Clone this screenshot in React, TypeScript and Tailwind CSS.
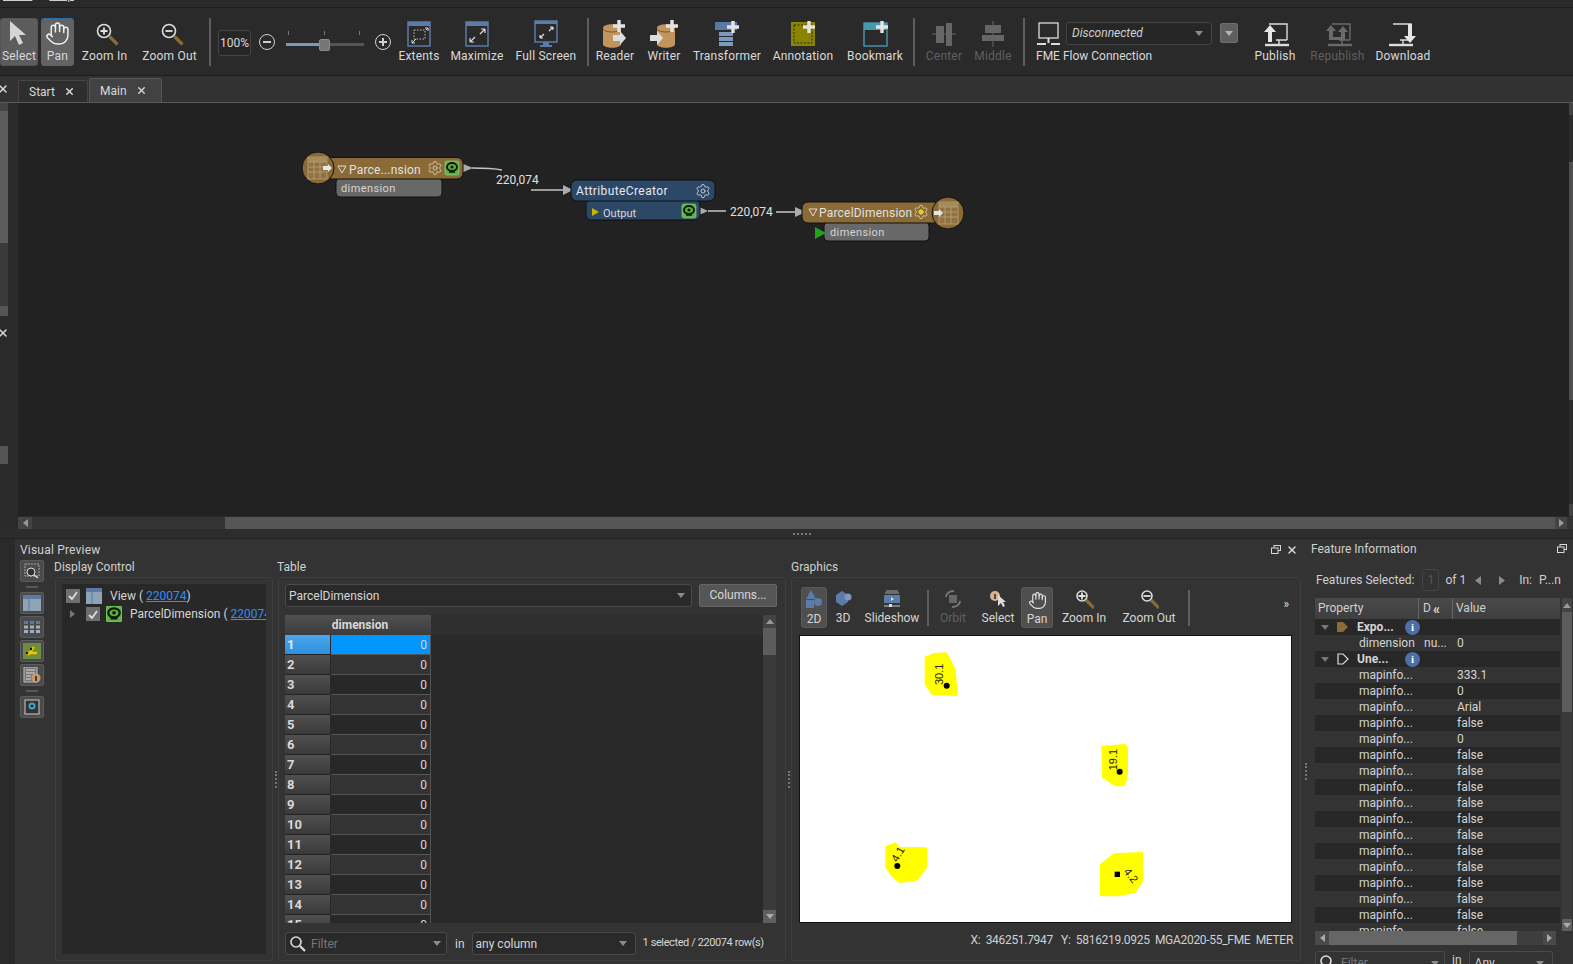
import React from 'react';
import { Hand, X, Settings } from 'lucide-react';

const font = { fontFamily: 'Roboto,"Noto Sans",sans-serif' };

// small drawn icons, all on a 32x30 box unless said otherwise
const Svg = ({ children, w = 32, h = 30 }: { children: React.ReactNode; w?: number; h?: number }) => (
  <svg width={w} height={h} viewBox={`0 0 ${w} ${h}`} className="block shrink-0">{children}</svg>
);
const Plus = ({ x, y, s = 12 }: { x: number; y: number; s?: number }) => (
  <path d={`M${x - s / 2} ${y}h${s}M${x} ${y - s / 2}v${s}`} stroke="#e4e4e4" strokeWidth="3.4" />
);
const Lens = ({ sign, cx = 13, cy = 11, r = 6.5 }: { sign: '+' | '-'; cx?: number; cy?: number; r?: number }) => (
  <g>
    <path d={`M${cx + r - 1} ${cy + r - 1}l8 8`} stroke="#8a6a34" strokeWidth="3.2" />
    <circle cx={cx} cy={cy} r={r} fill="#2a2a2a" stroke="#dcdcdc" strokeWidth="1.6" />
    <path d={sign === '+' ? `M${cx - 3.5} ${cy}h7M${cx} ${cy - 3.5}v7` : `M${cx - 3.5} ${cy}h7`} stroke="#e4e4e4" strokeWidth="1.8" />
  </g>
);
const Can = () => (
  <g>
    <path d="M4 9c0-5 18-5 18 0v16c0 5-18 5-18 0z" fill="#c2955c" />
    <path d="M4 10c2 4 16 4 18 0" stroke="#7c5a2c" strokeWidth="1" fill="none" />
  </g>
);
const Arrow = ({ x, y, fill = '#dcdcdc' }: { x: number; y: number; fill?: string }) => (
  <path d={`M${x} ${y - 3}h7v-4l6 7-6 7v-4h-7z`} fill={fill} />
);
const Net = ({ c = '#dcdcdc' }: { c?: string }) => (
  <g fill="none" stroke={c} strokeWidth="1.4">
    <path d="M10 4h18v16" />
    <path d="M17 20h11M20 20v5" />
    <path d="M6 25h24" strokeWidth="2.4" />
  </g>
);

const Tool = ({ w, label, active, selected, disabled, children }: { w: string; label: string; active?: boolean; selected?: boolean; disabled?: boolean; children: React.ReactNode }) => (
  <div className={`${w} h-[48px] shrink-0 flex flex-col items-center rounded-[3px] border ${selected ? 'border-[#2f6fa8] bg-[#636363]' : active ? 'border-[#555] bg-[#5c5c5c]' : 'border-transparent'}`}>
    <div className="h-[29px] flex items-center justify-center">{children}</div>
    <span className={`text-[12px] leading-[16px] tracking-[.2px] whitespace-nowrap ${disabled ? 'text-[#5f5f5f]' : 'text-[#d9d9d9]'}`}>{label}</span>
  </div>
);
const Sep = ({ m }: { m: string }) => <div className={`w-[2px] h-[48px] bg-[#5e5e5e] shrink-0 ${m}`} />;

function Toolbar() {
  return (
    <div className="h-[68px] bg-[#2a2a2a] border-b border-[#1e1e1e] flex items-start pt-[10px] shrink-0">
      <Tool w="w-[38px]" label="Select" active>
        <Svg w={26} h={28}><path d="M4 1v20l5-5 4 9 4-2-4-8h7z" fill="#d6d6d6" /></Svg>
      </Tool>
      <div className="w-[3px] shrink-0" />
      <Tool w="w-[33px]" label="Pan" selected><Hand size={25} strokeWidth={1.4} color="#f0f0f0" /></Tool>
      <Tool w="w-[61px]" label="Zoom In"><Svg w={28} h={28}><Lens sign="+" /></Svg></Tool>
      <Tool w="w-[69px]" label="Zoom Out"><Svg w={28} h={28}><Lens sign="-" /></Svg></Tool>
      <Sep m="ml-[5px]" />
      <div className="ml-[7px] w-[33px] h-[26px] mt-[12px] border border-[#444] rounded-[3px] bg-[#262626] text-[12px] leading-[24px] text-center text-[#d9d9d9] shrink-0">100%</div>
      <div className="ml-[8px] mt-[16px] w-[16px] h-[16px] rounded-full border-[1.5px] border-[#d0d0d0] flex items-center justify-center shrink-0"><div className="w-[8px] h-[2px] bg-[#d0d0d0]" /></div>
      <div className="ml-[11px] mt-[13px] w-[78px] shrink-0">
        <div className="flex justify-between px-[4px] pl-[2px] h-[4px]">
          <div className="w-px h-[4px] bg-[#777]" /><div className="w-px h-[4px] bg-[#777]" /><div className="w-px h-[4px] bg-[#777]" />
        </div>
        <div className="flex h-[15px] items-center mt-[2px]">
          <div className="w-[33px] h-[3px] bg-[#7b98c0]" />
          <div className="w-[11px] h-[12px] rounded-[2px] bg-[#767676] border border-[#8a8a8a]" />
          <div className="flex-1 h-[3px] bg-[#555]" />
        </div>
      </div>
      <div className="ml-[11px] mt-[16px] w-[16px] h-[16px] rounded-full border-[1.5px] border-[#d0d0d0] flex items-center justify-center relative shrink-0">
        <div className="w-[8px] h-[2px] bg-[#d0d0d0]" /><div className="absolute w-[2px] h-[8px] bg-[#d0d0d0]" />
      </div>
      <div className="w-[7px] shrink-0" />
      <Tool w="w-[42px]" label="Extents">
        <Svg w={24} h={26}><rect x="1" y="1" width="22" height="24" fill="none" stroke="#5b7ba8" strokeWidth="1.5" /><rect x="1" y="1" width="22" height="4" fill="#5b7ba8" /><rect x="7" y="9" width="11" height="9" fill="none" stroke="#bbb" strokeDasharray="1.5 1.5" /><path d="M5 22l4-4M5 22h3M5 22v-3M19 9l2-2M21 7h-3M21 7v3" stroke="#ddd" /></Svg>
      </Tool>
      <Tool w="w-[74px]" label="Maximize">
        <Svg w={24} h={26}><rect x="1" y="1" width="22" height="24" fill="none" stroke="#5b7ba8" strokeWidth="1.5" /><rect x="1" y="1" width="22" height="4" fill="#5b7ba8" /><path d="M5 21l5-5M5 21h4M5 21v-4M20 8l-5 5M20 8h-4M20 8v4" stroke="#ddd" strokeWidth="1.2" fill="none" /></Svg>
      </Tool>
      <Tool w="w-[64px]" label="Full Screen">
        <Svg w={24} h={28}><rect x="1" y="1" width="22" height="21" fill="none" stroke="#5b7ba8" strokeWidth="1.5" /><rect x="1" y="1" width="22" height="3" fill="#5b7ba8" /><path d="M6 18l4-4M6 18h3M6 18v-3M19 7l-4 4M19 7h-3M19 7v3" stroke="#ddd" strokeWidth="1.2" fill="none" /><path d="M9 22h6v3h3v2H6v-2h3z" fill="#5b7ba8" /></Svg>
      </Tool>
      <Sep m="ml-[9px]" />
      <div className="w-[3px] shrink-0" />
      <Tool w="w-[46px]" label="Reader"><Svg w={32} h={30}><Can /><Arrow x={14} y={19} /><Plus x={20} y={7} /></Svg></Tool>
      <Tool w="w-[52px]" label="Writer"><Svg w={32} h={30}><g transform="translate(5 0)"><Can /></g><Arrow x={2} y={19} /><Plus x={24} y={7} /></Svg></Tool>
      <Tool w="w-[74px]" label="Transformer">
        <Svg w={28} h={28}><rect x="2" y="2" width="22" height="8" fill="#5878a6" /><rect x="6" y="12" width="14" height="4" fill="#7d99bf" /><rect x="6" y="17" width="14" height="4" fill="#7d99bf" /><rect x="6" y="22" width="14" height="4" fill="#7d99bf" /><Plus x={20} y={7} /></Svg>
      </Tool>
      <Tool w="w-[78px]" label="Annotation">
        <Svg w={28} h={28}><rect x="2" y="2" width="24" height="24" fill="#8b8400" /><rect x="5" y="5" width="18" height="18" fill="none" stroke="#2b2b10" strokeDasharray="2 1.5" /><Plus x={20} y={7} /></Svg>
      </Tool>
      <Tool w="w-[66px]" label="Bookmark">
        <Svg w={28} h={28}><rect x="3" y="3" width="23" height="23" fill="none" stroke="#459aaf" strokeWidth="1.4" /><rect x="3" y="3" width="23" height="7" fill="#459aaf" /><Plus x={21} y={7} /></Svg>
      </Tool>
      <Sep m="ml-[5px]" />
      <div className="w-[5px] shrink-0" />
      <Tool w="w-[48px]" label="Center" disabled>
        <Svg w={28} h={28}><path d="M2 14h24" stroke="#666" /><rect x="6" y="6" width="8" height="17" fill="#666" /><rect x="16" y="3" width="6" height="23" fill="#666" /></Svg>
      </Tool>
      <Tool w="w-[50px]" label="Middle" disabled>
        <Svg w={28} h={28}><path d="M14 1v26" stroke="#666" /><rect x="6" y="5" width="16" height="8" fill="#666" /><rect x="3" y="15" width="22" height="6" fill="#666" /></Svg>
      </Tool>
      <Sep m="ml-[5px]" />
      <div className="ml-[11px] w-[204px] shrink-0 h-[48px] flex flex-col">
        <div className="h-[30px] flex items-center">
          <Svg w={26} h={26}><rect x="3" y="3" width="19" height="15" fill="none" stroke="#dcdcdc" strokeWidth="1.3" /><path d="M12.5 18v5M1 24h9M15 24h9" stroke="#dcdcdc" strokeWidth="2" /></Svg>
          <div className="ml-[4px] w-[146px] h-[23px] border border-[#444] rounded-[3px] bg-[#262626] flex items-center justify-between pl-[5px] pr-[8px] shrink-0">
            <span className="text-[12px] italic text-[#d0d0d0]">Disconnected</span>
            <svg width="8" height="5"><path d="M0 0h8l-4 5z" fill="#8b8b8b" /></svg>
          </div>
          <div className="ml-[8px] w-[18px] h-[20px] bg-[#5f5f5f] border border-[#6e6e6e] rounded-[2px] flex items-center justify-center shrink-0">
            <svg width="8" height="5"><path d="M0 0h8l-4 5z" fill="#b4b4b4" /></svg>
          </div>
        </div>
        <span className="text-[12px] leading-[16px] whitespace-nowrap text-[#d9d9d9]">FME Flow Connection</span>
      </div>
      <Tool w="w-[70px]" label="Publish"><Svg w={32} h={28}><Net /><path d="M9 22v-10H5l6-7 6 7h-4v10z" fill="#e6e6e6" /></Svg></Tool>
      <Tool w="w-[55px]" label="Republish" disabled><Svg w={32} h={28}><Net c="#6a6a6a" /><path d="M7 20V11H4l5-6 5 6h-3v6h8v-5h-3l5-6 5 6h-3v8z" fill="#6a6a6a" /></Svg></Tool>
      <Tool w="w-[76px]" label="Download"><Svg w={32} h={28}><g transform="translate(-4 0)"><Net /></g><path d="M21 4h4v12h4l-6 7-6-7h4z" fill="#e6e6e6" /></Svg></Tool>
    </div>
  );
}

function Tabs() {
  return (
    <div className="h-[27px] bg-[#323232] border-b border-[#5a5a5a] flex items-end shrink-0 relative">
      <div className="w-[18px] h-full flex items-center justify-center -ml-[6px]"><X size={12} strokeWidth={3} color="#d8d8d8" /></div>
      <div className="ml-[6px] w-[70px] h-[22px] bg-[#2e2e2e] border border-b-0 border-[#444] rounded-t-[2px] flex items-center pl-[10px] gap-[9px] text-[12px] text-[#d9d9d9]">
        Start <X size={11} strokeWidth={3} color="#d8d8d8" />
      </div>
      <div className="ml-[1px] w-[73px] h-[24px] bg-[#424242] border border-b-0 border-[#555] rounded-t-[2px] flex items-center pl-[10px] gap-[9px] text-[12px] text-[#d9d9d9]">
        Main <X size={11} strokeWidth={3} color="#d8d8d8" />
      </div>
    </div>
  );
}

const Gear = ({ x, y, dot, c = '#d6c9a8' }: { x: number; y: number; dot?: boolean; c?: string }) => (
  <g>
    <Settings x={x - 8} y={y - 8} width={16} height={16} color={c} strokeWidth={1.4} />
    {dot && <circle cx={x} cy={y} r="2.4" fill="#e3d21c" />}
  </g>
);
const GreenLens = ({ x, y, s = 14 }: { x: number; y: number; s?: number }) => (
  <g transform={`translate(${x} ${y})`}>
    <rect width={s} height={s} rx="2" fill="#5cb53f" stroke="#9ad58a" strokeWidth=".6" />
    <ellipse cx={s / 2} cy={s / 2 - 1} rx={s / 2 - 2} ry={s / 2 - 3} fill="none" stroke="#0c1a08" strokeWidth="2" />
    <circle cx={s / 2} cy={s / 2 - 1} r="1.6" fill="#0c1a08" />
    <path d={`M${s / 2 - 3} ${s - 3}h6`} stroke="#0c1a08" strokeWidth="1.6" />
  </g>
);
const TableGlyph = ({ x, y }: { x: number; y: number }) => (
  <g transform={`translate(${x} ${y})`}>
    <rect width="19" height="22" fill="#8f7344" stroke="#b9a278" strokeWidth=".8" />
    <rect width="19" height="5" fill="#a58b5e" />
    <path d="M0 5h19M0 10h19M0 15h19M6 5v17M12 5v17" stroke="#b9a278" strokeWidth=".8" />
  </g>
);

// the workspace: nodes sit on a free canvas, so these are placed by coordinates
function Canvas() {
  return (
    <div className="relative flex-1 bg-[#222222] overflow-hidden">
      {/* origin of this box is 18,103 on the page */}
      <svg width="1551" height="413" className="absolute left-0 top-0">
        <g transform="translate(-18 -103)">
          <path d="M472 168c12 0 20 0 30 2M531 190h34M708 211h18M776 212h22" stroke="#c4c4c4" strokeWidth="1.4" fill="none" />
          <path d="M461 163l12 5-12 5zM563 185l10 5-10 5zM697 206l11 5-11 5zM795 207l11 5-11 5z" fill="#a9adb3" />

          <rect x="336" y="178" width="106" height="19" rx="4" fill="#686868" stroke="#111" />
          <rect x="326" y="157.5" width="137" height="21.5" rx="6" fill="#8a6a37" stroke="#111" />
          <circle cx="318" cy="168" r="16" fill="#8a6a37" stroke="#111" />
          <TableGlyph x={308} y={157} />
          <path d="M323 166h5v-2l4 4-4 4v-2h-5z" fill="#e6e6e6" />
          <path d="M338 166h8l-4 7z" fill="none" stroke="#e4dcc6" />
          <Gear x={435} y={168} />
          <GreenLens x={445} y={161} />

          <rect x="586" y="200" width="114" height="20" rx="5" fill="#2d4766" stroke="#111" />
          <rect x="571" y="180" width="144" height="21" rx="6" fill="#2d4766" stroke="#111" />
          <Gear x={703} y={191} c="#c4d0e0" />
          <path d="M592 208l7 4-7 4z" fill="#c9b400" />
          <GreenLens x={682} y={204} />

          <rect x="824" y="222" width="105" height="19" rx="4" fill="#686868" stroke="#111" />
          <rect x="802" y="202" width="138" height="21" rx="6" fill="#8a6a37" stroke="#111" />
          <path d="M809 209h8l-4 7z" fill="none" stroke="#e4dcc6" />
          <Gear x={921} y={212} dot />
          <circle cx="948" cy="213" r="16" fill="#8a6a37" stroke="#111" />
          <TableGlyph x={939} y={202} />
          <path d="M934 211h5v-2l4 4-4 4v-2h-5z" fill="#e6e6e6" />
          <path d="M815 227l11 6-11 6z" fill="#1fa31f" />
        </g>
      </svg>
      <span className="absolute left-[331px] top-[59px] text-[12px] leading-[16px] tracking-[.2px] text-[#e0e0e0]">Parce...nsion</span>
      <span className="absolute left-[323px] top-[78px] text-[11px] leading-[16px] tracking-[.4px] text-[#d5d5d5]">dimension</span>
      <span className="absolute left-[478px] top-[69px] text-[12px] leading-[16px] text-[#e0e0e0]">220,074</span>
      <span className="absolute left-[558px] top-[80px] text-[12px] leading-[16px] tracking-[.4px] text-[#e8e8e8]">AttributeCreator</span>
      <span className="absolute left-[585px] top-[103px] text-[11px] leading-[16px] text-[#d8d8d8]">Output</span>
      <span className="absolute left-[712px] top-[101px] text-[12px] leading-[16px] text-[#e0e0e0]">220,074</span>
      <span className="absolute left-[801px] top-[102px] text-[12px] leading-[16px] tracking-[.2px] text-[#e0e0e0]">ParcelDimension</span>
      <span className="absolute left-[812px] top-[122px] text-[11px] leading-[16px] tracking-[.4px] text-[#d5d5d5]">dimension</span>
    </div>
  );
}

const BtnIcon = ({ children }: { children: React.ReactNode }) => (
  <div className="w-[24px] h-[22px] bg-[#4b4b4b] border border-[#5c5c5c] rounded-[2px] flex items-center justify-center">{children}</div>
);
const MiniSep = () => <div className="w-[12px] h-[2px] bg-[#5a5a5a] mx-auto my-[2px]" />;

function PreviewStrip() {
  return (
    <div className="w-[24px] ml-[6px] mr-[11px] flex flex-col gap-[2px] shrink-0 pt-[3px]">
      <BtnIcon><svg width="16" height="16"><rect x="1" y="1" width="14" height="12" fill="none" stroke="#aaa" strokeDasharray="2 1" /><circle cx="7" cy="9" r="4" fill="#333" stroke="#ddd" /><path d="M10 12l4 3" stroke="#ddd" strokeWidth="1.5" /></svg></BtnIcon>
      <MiniSep />
      <BtnIcon><svg width="18" height="16"><rect width="18" height="16" fill="#8ea4b4" /><rect width="18" height="4" fill="#5b7ba0" /><path d="M6 4v12" stroke="#5b7ba0" /></svg></BtnIcon>
      <BtnIcon><svg width="16" height="14"><path d="M0 1h4v3H0zM6 1h4v3H6zM12 1h4v3h-4z" fill="#5b7ba0" /><path d="M0 5.500h4v3H0zM6 5.500h4v3H6zM12 5.500h4v3h-4zM0 10h4v3H0zM6 10h4v3H6zM12 10h4v3h-4z" fill="#9fb0c0" /></svg></BtnIcon>
      <BtnIcon><svg width="18" height="16"><rect width="18" height="16" fill="#6f8b3c" /><path d="M5 12l6-8M3 10h11" stroke="#e8c700" strokeWidth="2.4" /><circle cx="8" cy="6" r="1.200" fill="#111" /><circle cx="4" cy="10" r="1.200" fill="#111" /></svg></BtnIcon>
      <BtnIcon><svg width="18" height="16"><rect x="1" width="13" height="15" fill="#777" stroke="#bbb" /><path d="M3 3h9M3 6h9M3 9h5M3 12h5" stroke="#ddd" /><circle cx="13" cy="11" r="4.500" fill="#c99a6c" /><path d="M13 9v5" stroke="#222" strokeWidth="1.500" /></svg></BtnIcon>
      <MiniSep />
      <BtnIcon><svg width="16" height="16"><rect x="1" y="1" width="14" height="14" fill="#333" stroke="#ccc" /><circle cx="8" cy="7" r="3.500" fill="#3aa3c2" /><circle cx="8" cy="7" r="1.300" fill="#111" /></svg></BtnIcon>
    </div>
  );
}

const Check = () => (
  <div className="w-[14px] h-[14px] bg-[#6e6e6e] flex items-center justify-center shrink-0">
    <svg width="10" height="9"><path d="M1 5l3 3 5-7" fill="none" stroke="#ddd" strokeWidth="1.800" /></svg>
  </div>
);
const Lnk = ({ children }: { children: string }) => <span className="text-[#2e8dff] underline">{children}</span>;

function DisplayControl() {
  return (
    <div className="w-[218px] shrink-0 flex flex-col">
      <div className="h-[19px] text-[12px] leading-[19px] text-[#d0d0d0] -ml-px">Display Control</div>
      <div className="flex-1 border border-[#3e3e3e] rounded-[3px] p-[6px] min-h-0">
        <div className="h-full bg-[#282828] pt-[2px] overflow-hidden">
          <div className="h-[19px] flex items-center pl-[4px] text-[12px] text-[#d6d6d6] whitespace-nowrap">
            <Check />
            <svg width="16" height="16" className="ml-[6px] shrink-0"><rect width="16" height="16" fill="#8ea4b4" /><rect width="16" height="4" fill="#5b7ba0" /><path d="M6 4v12" stroke="#5b7ba0" /></svg>
            <span className="ml-[8px]">View ( <Lnk>220074</Lnk>)</span>
          </div>
          <div className="h-[18px] flex items-center pl-[8px] text-[12px] text-[#d6d6d6] whitespace-nowrap">
            <svg width="6" height="8" className="shrink-0"><path d="M0 0l5 4-5 4z" fill="#777" /></svg>
            <div className="ml-[10px] flex items-center"><Check /></div>
            <svg width="16" height="16" viewBox="0 0 14 14" className="ml-[6px] shrink-0"><GreenLens x={0} y={0} /></svg>
            <span className="ml-[8px]">ParcelDimension ( <Lnk>220074</Lnk></span>
          </div>
        </div>
      </div>
    </div>
  );
}

const rows = [1, 2, 3, 4, 5, 6, 7, 8, 9, 10, 11, 12, 13, 14, 15];

function TablePanel() {
  return (
    <div className="w-[508px] shrink-0 flex flex-col">
      <div className="h-[19px] text-[12px] leading-[19px] text-[#d0d0d0] -ml-px">Table</div>
      <div className="flex-1 border border-[#3e3e3e] rounded-[3px] px-[6px] pt-[6px] min-h-0 flex flex-col">
        <div className="flex h-[23px] shrink-0">
          <div className="w-[407px] bg-[#2a2a2a] border border-[#4a4a4a] rounded-[3px] flex items-center justify-between pl-[3px] pr-[6px] text-[12px] text-[#d6d6d6]">
            ParcelDimension
            <svg width="8" height="5"><path d="M0 0h8l-4 5z" fill="#8b8b8b" /></svg>
          </div>
          <div className="ml-[7px] w-[78px] bg-[#565656] border border-[#666] rounded-[2px] text-center text-[12px] leading-[20px] text-[#d6d6d6]">Columns...</div>
        </div>
        <div className="mt-[8px] flex h-[308px] shrink-0">
          <div className="w-[478px] bg-[#292929] overflow-hidden">
            <div className="flex h-[20px] bg-[#2f2f2f]">
              <div className="w-[146px] bg-gradient-to-b from-[#505050] to-[#3c3c3c] text-center text-[12px] font-bold leading-[20px] text-[#d8d8d8] pl-[4px]">dimension</div>
            </div>
            {rows.map((n) => (
              <div key={n} className="flex h-[20px]">
                <div className={`w-[45px] pl-[2px] text-[13px] font-bold leading-[20px] border-b border-[#222] ${n === 1 ? 'bg-gradient-to-b from-[#4aa8ee] to-[#2f8fdb] text-[#e8e8e8]' : 'bg-gradient-to-b from-[#505050] to-[#3a3a3a] text-[#d8d8d8]'}`}>{n}</div>
                <div className={`ml-px w-[100px] text-right pr-[3px] text-[12px] leading-[20px] text-[#d8d8d8] border-b border-r border-[#555] ${n === 1 ? 'bg-[#0095ff]' : n % 2 ? 'bg-[#282828]' : 'bg-[#333333]'}`}>0</div>
              </div>
            ))}
          </div>
          <div className="w-[13px] flex flex-col bg-[#3a3a3a]">
            <div className="h-[13px] bg-[#444] flex items-center justify-center"><svg width="8" height="5"><path d="M4 0l4 5H0z" fill="#999" /></svg></div>
            <div className="h-[27px] bg-[#5c5c5c]" />
            <div className="flex-1" />
            <div className="h-[13px] bg-[#5f5f5f] flex items-center justify-center"><svg width="8" height="5"><path d="M0 0h8l-4 5z" fill="#aaa" /></svg></div>
          </div>
        </div>
        <div className="mt-[9px] flex items-center text-[12px] text-[#d6d6d6] h-[23px] shrink-0">
          <div className="w-[162px] h-full border border-[#4a4a4a] rounded-[3px] bg-[#2a2a2a] flex items-center pl-[3px] pr-[5px]">
            <svg width="18" height="18" className="shrink-0"><circle cx="7" cy="7" r="5" fill="none" stroke="#dcdcdc" strokeWidth="1.600" /><path d="M11 11l5 5" stroke="#dcdcdc" strokeWidth="2.200" /></svg>
            <span className="ml-[4px] text-[#777] flex-1">Filter</span>
            <svg width="8" height="5"><path d="M0 0h8l-4 5z" fill="#8b8b8b" /></svg>
          </div>
          <span className="ml-[8px]">in</span>
          <div className="ml-[7px] w-[164px] h-full border border-[#4a4a4a] rounded-[3px] bg-[#2a2a2a] flex items-center justify-between pl-[3px] pr-[8px] shrink-0">
            any column
            <svg width="8" height="5"><path d="M0 0h8l-4 5z" fill="#8b8b8b" /></svg>
          </div>
          <span className="ml-[7px] whitespace-nowrap text-[11px] tracking-[-.4px]">1 selected / 220074 row(s)</span>
        </div>
      </div>
    </div>
  );
}

const GTool = ({ w, label, on, disabled, children }: { w: string; label: string; on?: boolean; disabled?: boolean; children: React.ReactNode }) => (
  <div className={`${w} h-[41px] shrink-0 flex flex-col items-center rounded-[3px] ${on ? 'bg-[#4f4f4f] border border-[#5a5a5a]' : ''}`}>
    <div className="h-[24px] flex items-center justify-center">{children}</div>
    <span className={`text-[12px] leading-[15px] whitespace-nowrap ${disabled ? 'text-[#606060]' : 'text-[#d6d6d6]'}`}>{label}</span>
  </div>
);

function GraphicsPanel() {
  return (
    <div className="w-[510px] shrink-0 flex flex-col">
      <div className="h-[19px] text-[12px] leading-[19px] text-[#d0d0d0]">Graphics</div>
      <div className="flex-1 border border-[#3e3e3e] rounded-[3px] min-h-0 flex flex-col pl-[7px] pr-[8px]">
        <div className="h-[57px] pt-[9px] flex shrink-0 relative pl-[2px]">
          <GTool w="w-[26px]" label="2D" on><svg width="18" height="20"><path d="M6 0l5 9H1z" fill="#5b7ba8" /><rect x="1" y="10" width="8" height="8" fill="#5b7ba8" /><circle cx="13" cy="12" r="4" fill="#5b7ba8" /></svg></GTool>
          <GTool w="w-[32px]" label="3D"><svg width="18" height="20"><path d="M8 2l6 4v7l-6 4-6-4V6z" fill="#5b7ba8" /><circle cx="14" cy="8" r="3.500" fill="#7d99bf" /></svg></GTool>
          <GTool w="w-[66px]" label="Slideshow"><svg width="18" height="18"><path d="M3 1h12M2 3h14" stroke="#9ba8b8" /><rect x="1" y="5" width="16" height="8" fill="#5b7ba8" /><path d="M8 7l3 2-3 2z" fill="#ddd" /><path d="M1 16h16" stroke="#ccc" /><rect x="6" y="14" width="3" height="3" fill="#ddd" /></svg></GTool>
          <div className="w-[2px] h-[36px] mt-[3px] bg-[#5e5e5e] mx-[2px] shrink-0" />
          <GTool w="w-[44px]" label="Orbit" disabled><svg width="18" height="20"><rect x="5" y="6" width="8" height="8" fill="#666" /><path d="M2 8c0-4 4-6 8-6M16 12c0 4-4 6-8 6" stroke="#777" strokeWidth="2" fill="none" /></svg></GTool>
          <GTool w="w-[46px]" label="Select"><svg width="20" height="20"><circle cx="7" cy="7" r="5" fill="#d8b48c" /><path d="M7 5v5" stroke="#222" strokeWidth="1.500" /><path d="M10 6v11l3-3 2 4 2-1-2-4h3z" fill="#ddd" /></svg></GTool>
          <GTool w="w-[32px]" label="Pan" on><Hand size={19} strokeWidth={1.400} color="#e8e8e8" /></GTool>
          <GTool w="w-[62px]" label="Zoom In"><svg width="20" height="20"><Lens sign="+" cx={8} cy={7} r={5} /></svg></GTool>
          <GTool w="w-[68px]" label="Zoom Out"><svg width="20" height="20"><Lens sign="-" cx={8} cy={7} r={5} /></svg></GTool>
          <div className="w-[2px] h-[36px] mt-[3px] bg-[#5e5e5e] ml-[5px] shrink-0" />
          <span className="absolute right-[4px] top-[17px] text-[12px] text-[#dcdcdc] tracking-[-1px]">»</span>
        </div>
        <div className="h-[288px] border border-[#111] bg-white shrink-0 overflow-hidden">
          <svg width="490" height="286" viewBox="-180 -15 1470 858" className="block">
            <g fill="#ffff00" stroke="#ffff00" strokeWidth="8" strokeLinejoin="round">
              <path d="M198 50l25-10 35-2 25 47 6 76-72-4-19-28z" />
              <path d="M728 318l66-5 6 9v78l-8 32h-26l-36-25z" />
              <path d="M80 618l25-10 10 13 82 2v56l-28 36-50 7-22-19-17-25z" />
              <path d="M724 672l38-31 83-4v83l-22 33-53 9-46 0z" />
            </g>
            <g fill="#000">
              <circle cx="260" cy="134" r="9" />
              <circle cx="779" cy="392" r="9" />
              <circle cx="112" cy="675" r="9" />
              <rect x="764" y="692" width="16" height="16" />
            </g>
            <g fontSize="33" fill="#222" style={{ fontFamily: '"Liberation Sans",sans-serif' }}>
              <text transform="translate(249 132) rotate(-90)">30.1</text>
              <text transform="translate(770 388) rotate(-90)">19.1</text>
              <text transform="translate(112 665) rotate(-60)">4.1</text>
              <text transform="translate(790 692) rotate(52)">4.2</text>
            </g>
          </svg>
        </div>
        <div className="flex-1 flex items-center justify-end text-[12px] tracking-[-.3px] text-[#d0d0d0] whitespace-pre pr-0 -mr-[1px] pb-[3px]">X:  346251.7947   Y:  5816219.0925  MGA2020-55_FME  METER</div>
      </div>
    </div>
  );
}

const infoRows: { k?: string; v?: string; d?: string; head?: 'exp' | 'une' }[] = [
  { head: 'exp', k: 'Expo...' },
  { k: 'dimension', d: 'nu...', v: '0' },
  { head: 'une', k: 'Une...' },
  { k: 'mapinfo...', v: '333.1' },
  { k: 'mapinfo...', v: '0' },
  { k: 'mapinfo...', v: 'Arial' },
  { k: 'mapinfo...', v: 'false' },
  { k: 'mapinfo...', v: '0' },
  ...Array.from({ length: 12 }, () => ({ k: 'mapinfo...', v: 'false' })),
];

function FeaturePanel() {
  return (
    <div className="flex-1 min-w-0 flex flex-col">
      <div className="h-[25px] flex items-center justify-between pl-[1px] pr-[6px] pb-[6px] text-[12px] text-[#d0d0d0] shrink-0">
        Feature Information
        <RestoreIcon />
      </div>
      <div className="h-[32px] flex items-center pl-[6px] text-[12px] text-[#d0d0d0] whitespace-nowrap shrink-0">
        Features Selected:
        <div className="ml-[8px] w-[17px] h-[22px] border border-[#444] rounded-[3px] text-center leading-[20px] text-[#555]">1</div>
        <span className="ml-[6px]">of 1</span>
        <svg width="6" height="9" className="ml-[9px]"><path d="M6 0v9L0 4.500z" fill="#8a8a8a" /></svg>
        <svg width="6" height="9" className="ml-[18px]"><path d="M0 0v9l6-4.500z" fill="#8a8a8a" /></svg>
        <span className="ml-[14px]">In:</span>
        <span className="ml-[7px]">P...n</span>
      </div>
      <div className="ml-[5px] flex h-[333px] shrink-0 mt-[2px]">
        <div className="w-[245px] overflow-hidden">
          <div className="h-[21px] flex bg-gradient-to-b from-[#4a4a4a] to-[#3e3e3e] text-[12px] leading-[21px] text-[#d0d0d0]">
            <div className="w-[104px] pl-[3px] border-r border-[#666]">Property</div>
            <div className="w-[34px] pl-[4px] border-r border-[#666] flex items-center gap-[2px]">D<span className="font-bold tracking-[-1px] text-[#ddd] text-[14px] leading-[16px]">«</span></div>
            <div className="pl-[3px]">Value</div>
          </div>
          {infoRows.map((r, i) => (
            <div key={i} className={`h-[16px] flex items-center text-[12px] leading-[16px] text-[#d4d4d4] ${i % 2 ? 'bg-[#333333]' : 'bg-[#272727]'}`}>
              {r.head ? (
                <>
                  <svg width="8" height="5" className="ml-[6px]"><path d="M0 0h8l-4 5z" fill="#777" /></svg>
                  {r.head === 'exp' ? (
                    <svg width="12" height="12" className="ml-[8px]"><path d="M0 1h6l5 5-5 5H0z" fill="#8a6a37" /></svg>
                  ) : (
                    <svg width="12" height="12" className="ml-[8px]"><path d="M1 1h5l5 5-5 5H1z" fill="none" stroke="#ddd" strokeWidth="1.200" /></svg>
                  )}
                  <span className="ml-[8px] font-bold w-[47px]">{r.k}</span>
                  <span className="ml-[1px] w-[15px] h-[15px] rounded-full bg-[#4c6fa5] text-center text-[11px] leading-[15px] font-bold text-white" style={{ fontFamily: '"Liberation Serif",serif' }}>i</span>
                </>
              ) : (
                <>
                  <span className="ml-[44px] w-[65px] whitespace-nowrap">{r.k}</span>
                  <span className="w-[33px]">{r.d}</span>
                  <span>{r.v}</span>
                </>
              )}
            </div>
          ))}
        </div>
        <div className="ml-[2px] w-[10px] flex flex-col bg-[#4a4a4a]">
          <div className="h-[14px] bg-[#444] flex items-center justify-center"><svg width="8" height="5"><path d="M4 0l4 5H0z" fill="#999" /></svg></div>
          <div className="h-[100px] bg-[#5c5c5c]" />
          <div className="flex-1 bg-[#3a3a3a]" />
          <div className="h-[12px] bg-[#5f5f5f] flex items-center justify-center"><svg width="8" height="5"><path d="M0 0h8l-4 5z" fill="#aaa" /></svg></div>
        </div>
      </div>
      <div className="ml-[5px] w-[241px] h-[14px] flex items-center bg-[#3e3e3e] shrink-0">
        <div className="w-[14px] h-full bg-[#4a4a4a] flex items-center justify-center"><svg width="5" height="8"><path d="M5 0v8L0 4z" fill="#aaa" /></svg></div>
        <div className="w-[188px] h-full bg-[#666]" />
        <div className="flex-1" />
        <div className="w-[13px] h-full bg-[#4a4a4a] flex items-center justify-center"><svg width="5" height="8"><path d="M0 0v8l5-4z" fill="#aaa" /></svg></div>
      </div>
      <div className="ml-[5px] mt-[6px] flex items-start text-[12px] text-[#d0d0d0] h-[20px] overflow-hidden">
        <div className="w-[130px] h-[24px] border border-[#4a4a4a] rounded-[3px] flex items-center pl-[3px] pr-[5px]">
          <svg width="18" height="18" className="shrink-0"><circle cx="7" cy="7" r="5" fill="none" stroke="#dcdcdc" strokeWidth="1.600" /></svg>
          <span className="ml-[4px] text-[#777] flex-1">Filter</span>
          <svg width="8" height="5"><path d="M0 0h8l-4 5z" fill="#8b8b8b" /></svg>
        </div>
        <span className="ml-[7px]">in</span>
        <div className="ml-[7px] w-[84px] h-[24px] border border-[#4a4a4a] rounded-[3px] flex items-center justify-between pl-[5px] pr-[8px]">
          Any
          <svg width="8" height="5"><path d="M0 0h8l-4 5z" fill="#8b8b8b" /></svg>
        </div>
      </div>
    </div>
  );
}

const RestoreIcon = () => (
  <svg width="10" height="9"><rect x="3" y=".5" width="6.500" height="5" fill="none" stroke="#d8d8d8" /><rect x=".5" y="3" width="6.500" height="5.500" fill="#333" stroke="#d8d8d8" /></svg>
);
const Grip = ({ w }: { w: string }) => (
  <div className={`${w} shrink-0 flex items-center justify-center`}>
    <div className="w-[2px] h-[17px] border-l-2 border-dotted border-[#777] mt-[40px]" />
  </div>
);

export default function App() {
  return (
    <div className="w-[1573px] h-[964px] bg-[#2a2a2a] overflow-hidden flex flex-col" style={font}>
      <div className="h-[8px] bg-[#2a2a2a] border-b border-[#1e1e1e] shrink-0 overflow-hidden relative text-[12px] text-[#cfcfcf]">
        <div className="flex gap-[17px] pl-[3px] -mt-[13px] leading-[16px]"><span className="underline">Tools</span><span className="underline">Help</span></div>
      </div>
      <Toolbar />
      <Tabs />
      <div className="flex h-[426px] shrink-0">
        <div className="w-[18px] bg-[#2a2a2a] shrink-0 flex flex-col relative">
          <div className="w-[8px] h-[213px] flex flex-col bg-[#3a3a3a]">
            <div className="h-[8px] bg-[#444]" />
            <div className="h-[132px] bg-[#5c5c5c]" />
            <div className="flex-1" />
            <div className="h-[10px] bg-[#555]" />
          </div>
          <div className="h-[34px] flex items-center justify-center -ml-[12px]"><X size={12} strokeWidth={3} color="#d8d8d8" /></div>
          <div className="mt-[96px] w-[8px] h-[18px] bg-[#555]" />
        </div>
        <div className="flex-1 flex flex-col min-w-0">
          <div className="flex-1 flex min-h-0">
            <Canvas />
            <div className="w-[4px] bg-[#2c2c2c] flex flex-col shrink-0">
              <div className="h-[12px] bg-[#444]" />
              <div className="h-[47px]" />
              <div className="h-[238px] bg-[#4e4e4e]" />
              <div className="flex-1" />
              <div className="h-[12px] bg-[#444]" />
            </div>
          </div>
          <div className="h-[13px] bg-[#333] flex shrink-0 border-t border-[#2a2a2a]">
            <div className="w-[14px] bg-[#444] flex items-center justify-center"><svg width="5" height="8"><path d="M5 0v8L0 4z" fill="#999" /></svg></div>
            <div className="w-[193px]" />
            <div className="w-[1330px] bg-[#565656]" />
            <div className="w-[12px] bg-[#444] flex items-center justify-center"><svg width="5" height="8"><path d="M0 0v8l5-4z" fill="#999" /></svg></div>
          </div>
        </div>
      </div>
      <div className="h-[10px] bg-[#2c2c2c] shrink-0 flex items-center justify-center border-b border-[#222]">
        <div className="w-[18px] h-[2px] border-t-2 border-dotted border-[#777] ml-[30px]" />
      </div>
      <div className="flex-1 bg-[#333333] flex min-h-0">
        <div className="w-[15px] bg-[#2a2a2a] shrink-0" />
        <div className="w-[1288px] shrink-0 flex flex-col">
          <div className="h-[18px] flex items-center justify-between pl-[5px] pr-[5px] text-[12px] tracking-[.2px] text-[#d0d0d0] shrink-0 pt-[3px]">
            Visual Preview
            <div className="flex items-center gap-[5px]"><RestoreIcon /><X size={12} strokeWidth={3} color="#d8d8d8" /></div>
          </div>
          <div className="flex flex-1 min-h-0 pb-[3px]">
            <div className="-ml-[1px]"><PreviewStrip /></div>
            <div className="flex flex-1 pt-[1px] min-w-0">
              <DisplayControl />
              <Grip w="w-[5px]" />
              <TablePanel />
              <Grip w="w-[5px]" />
              <GraphicsPanel />
            </div>
          </div>
        </div>
        <Grip w="w-[6px]" />
        <div className="flex-1 min-w-0 border-l border-transparent"><FeaturePanel /></div>
      </div>
    </div>
  );
}
